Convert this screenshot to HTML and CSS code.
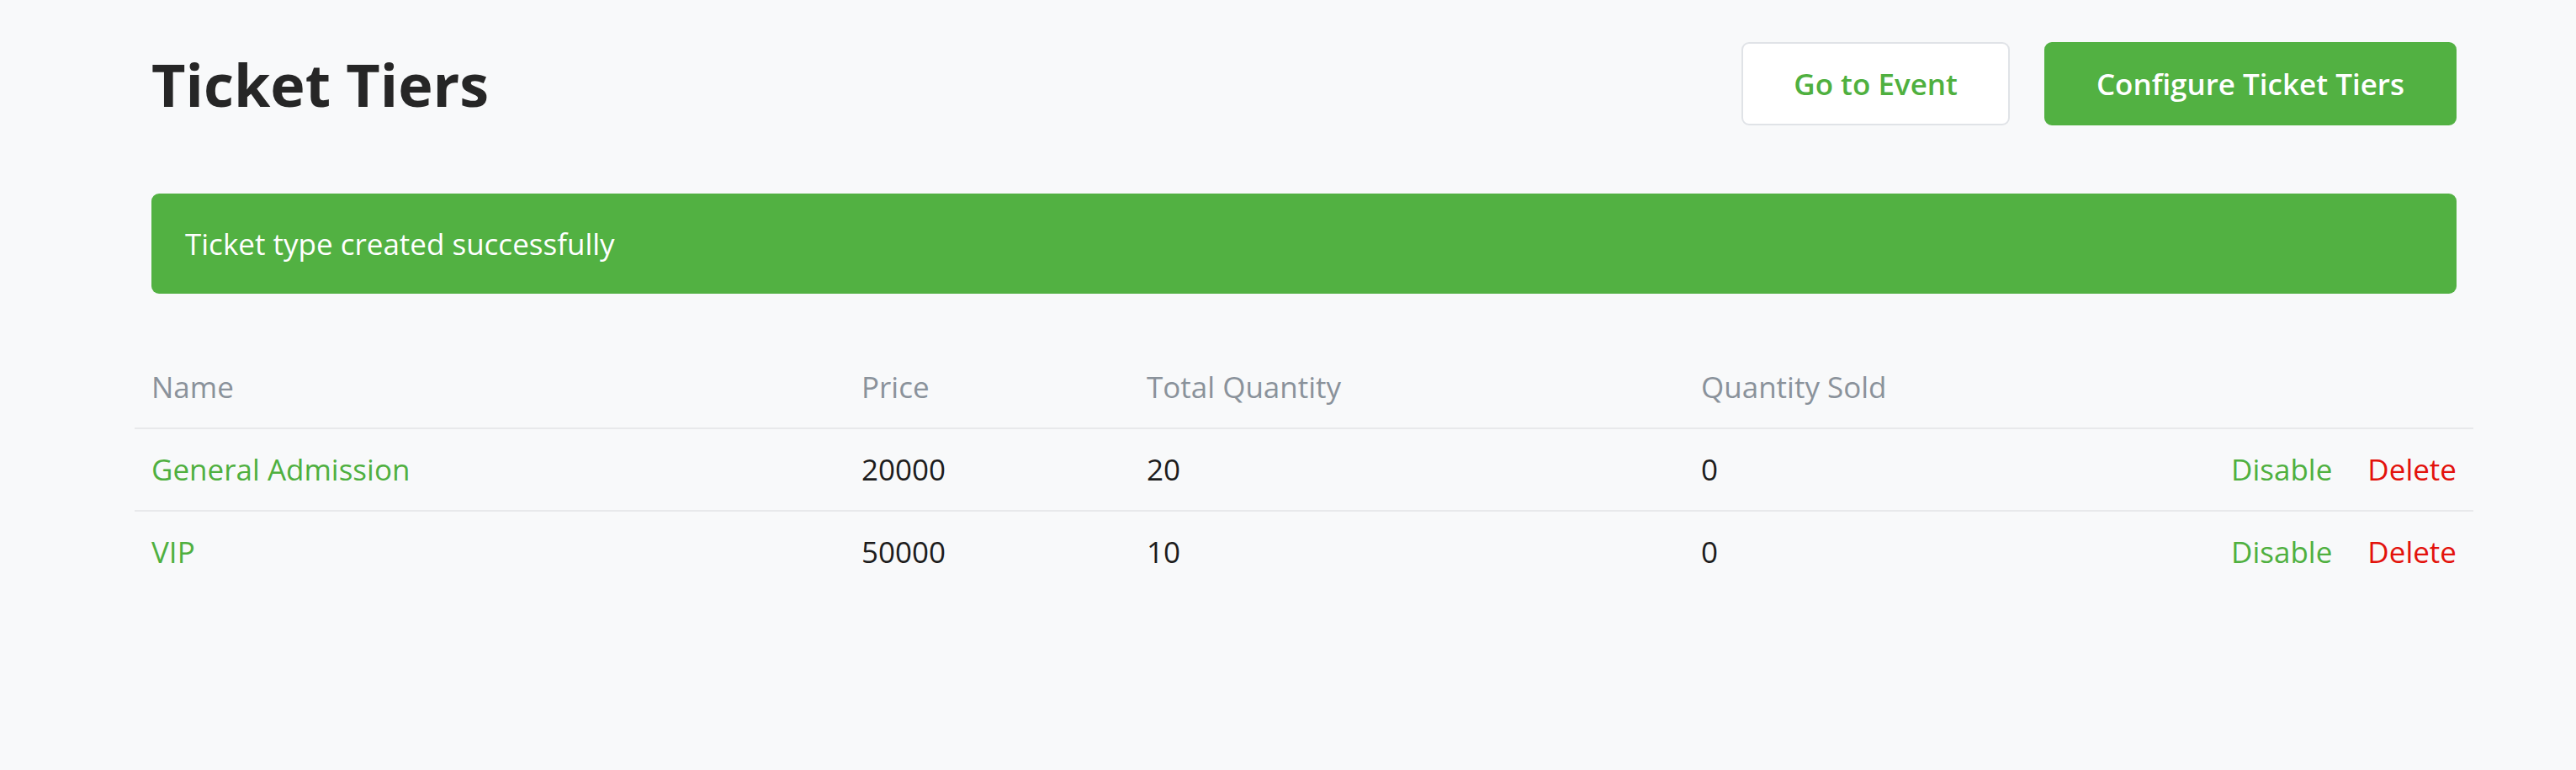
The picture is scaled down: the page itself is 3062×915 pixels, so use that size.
FILE: index.html
```html
<!DOCTYPE html>
<html lang="en">
<head>
<meta charset="utf-8">
<title>Ticket Tiers</title>
<link rel="stylesheet" href="styles.css">
</head>
<body>
<main class="page">
  <header class="page-header">
    <h1 class="title">Ticket Tiers</h1>
    <div class="header-actions">
      <a class="btn btn-outline" href="#">Go to Event</a>
      <a class="btn btn-primary" href="#">Configure Ticket Tiers</a>
    </div>
  </header>

  <div class="alert">Ticket type created successfully</div>

  <table class="tiers">
    <colgroup>
      <col class="col-name">
      <col class="col-price">
      <col class="col-total">
      <col class="col-sold">
      <col class="col-actions">
    </colgroup>
    <thead>
      <tr>
        <th>Name</th>
        <th>Price</th>
        <th>Total Quantity</th>
        <th>Quantity Sold</th>
        <th></th>
      </tr>
    </thead>
    <tbody>
      <tr>
        <td><a class="tier-link" href="#">General Admission</a></td>
        <td>20000</td>
        <td>20</td>
        <td>0</td>
        <td class="row-actions"><a class="link-disable" href="#">Disable</a><a class="link-delete" href="#">Delete</a></td>
      </tr>
      <tr>
        <td><a class="tier-link" href="#">VIP</a></td>
        <td>50000</td>
        <td>10</td>
        <td>0</td>
        <td class="row-actions"><a class="link-disable" href="#">Disable</a><a class="link-delete" href="#">Delete</a></td>
      </tr>
    </tbody>
  </table>
</main>
</body>
</html>
```

FILE: styles.css
```css
html, body {
  margin: 0;
  padding: 0;
}

body {
  background: #f8f9fa;
  font-family: "Open Sans", "Noto Sans", "Liberation Sans", sans-serif;
  color: #1c1c1c;
}

a {
  text-decoration: none;
}

.page {
  padding: 50px 142px 0 180px;
}

.page-header {
  display: flex;
  justify-content: space-between;
  align-items: center;
  height: 99px;
}

.title {
  margin: 0;
  font-size: 70px;
  font-weight: 700;
  line-height: 72px;
  color: #262626;
}

.header-actions {
  display: flex;
  gap: 41px;
}

.btn {
  display: inline-flex;
  align-items: center;
  justify-content: center;
  box-sizing: border-box;
  height: 99px;
  padding: 0 60px;
  border: 2px solid transparent;
  border-radius: 9px;
  font-size: 35px;
  font-weight: 600;
  line-height: 52px;
}

.btn-outline {
  background: #ffffff;
  border-color: #e0e3e7;
  color: #4fb03f;
}

.btn-primary {
  background: #52b142;
  border-color: #52b142;
  color: #ffffff;
}

.alert {
  margin-top: 81px;
  background: #52b142;
  color: #ffffff;
  border-radius: 9px;
  padding: 33px 40px;
  font-size: 35px;
  line-height: 53px;
}

.tiers {
  margin: 63px -20px 0 -20px;
  width: calc(100% + 40px);
  border-collapse: collapse;
  table-layout: fixed;
}

.col-name { width: 844px; }
.col-price { width: 339px; }
.col-total { width: 659px; }
.col-sold { width: 500px; }

.tiers th,
.tiers td {
  padding: 22px 20px 23px;
  font-size: 35px;
  line-height: 51px;
  text-align: left;
  white-space: nowrap;
}

.tiers th {
  font-weight: 400;
  color: #8a929b;
}

.tiers td {
  color: #1c1c1c;
}

.tiers tbody tr {
  border-top: 2px solid #e8e9eb;
}

.tier-link {
  color: #4fb03f;
}

.tiers td.row-actions {
  text-align: right;
}

.link-disable {
  color: #4fb03f;
}

.link-delete {
  color: #e3120c;
  margin-left: 42px;
}
```
